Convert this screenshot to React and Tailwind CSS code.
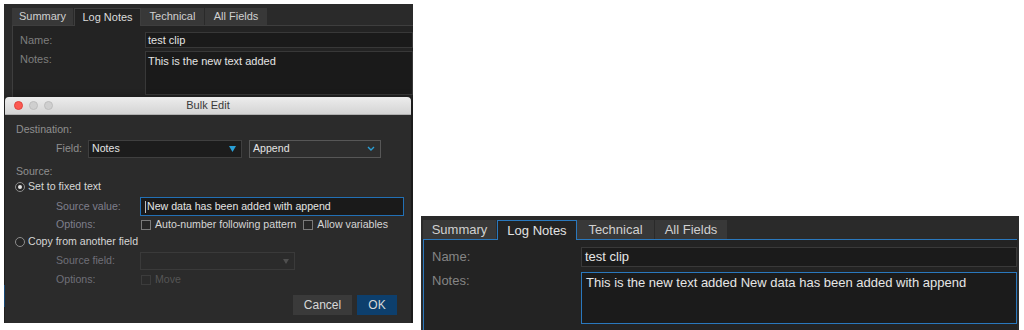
const Tab = ({ label, active, width, big }) => (
  <div
    className={
      "flex items-center justify-center shrink-0 " +
      (big ? "h-[19px] " : "h-[17px] ") +
      (active
        ? big
          ? "bg-[#232323] border-t border-x border-[#2a78bd] text-[#e2e2e2] relative z-10 -mb-px h-[20px]"
          : "bg-[#232323] border-t border-x border-[#3e3e3e] text-[#dcdcdc] relative z-10 -mb-px h-[18px]"
        : "bg-[#383838] text-[#d0d0d0] border-r border-[#2a2a2a]")
    }
    style={{ width }}
  >
    {label}
  </div>
);

const Radio = ({ checked }) => (
  <span className="w-[10px] h-[10px] rounded-full border border-[#8d8d8d] flex items-center justify-center shrink-0 bg-[#262626]">
    {checked && <span className="w-[4px] h-[4px] rounded-full bg-[#e6e6e6]" />}
  </span>
);

const Check = ({ dim }) => (
  <span
    className={
      "block w-[10px] h-[10px] border shrink-0 " +
      (dim ? "border-[#3c3c3c]" : "border-[#7a7a7a] bg-[#262626]")
    }
  />
);

const BulkEdit = () => (
  <div className="absolute left-[1px] top-[93px] w-[406px] h-[226px] bg-[#2b2b2b] shadow-[0_2px_8px_rgba(0,0,0,0.5)] rounded-t-[4px] text-[10.6px]">
    {/* title bar */}
    <div className="h-[18px] rounded-t-[4px] bg-gradient-to-b from-[#ededed] to-[#d4d4d4] border-b border-[#b0b0b0] flex items-center relative">
      <div className="flex items-center gap-[6px] pl-[9px]">
        <span className="w-[9px] h-[9px] rounded-full bg-[#fc5a52] border border-[#e0443e]" />
        <span className="w-[9px] h-[9px] rounded-full bg-[#cfcfcf] border border-[#bdbdbd]" />
        <span className="w-[9px] h-[9px] rounded-full bg-[#cfcfcf] border border-[#bdbdbd]" />
      </div>
      <div className="absolute inset-0 flex items-center justify-center text-[#3a3a3a] text-[11px]">
        Bulk Edit
      </div>
    </div>

    <div className="h-[14px] leading-[14px] mt-[7px] pl-[11px] text-[#8f8f8f]">
      Destination:
    </div>

    <div className="flex items-center mt-[4px] h-[18px]">
      <div className="w-[77px] text-right text-[#8f8f8f]">Field:</div>
      <div className="ml-[6px] w-[154px] h-[18px] bg-[#1c1c1c] border border-[#3f3f3f] flex items-center justify-between pl-[3px] pr-[5px] text-[#e4e4e4]">
        <span>Notes</span>
        <svg width="7" height="6" viewBox="0 0 7 6">
          <path d="M0 0 L7 0 L3.5 6 Z" fill="#2a9fd6" />
        </svg>
      </div>
      <div className="ml-[7px] w-[132px] h-[18px] bg-[#2e2e2e] border border-[#575757] flex items-center justify-between pl-[3px] pr-[5px] text-[#e4e4e4]">
        <span>Append</span>
        <svg width="8" height="6" viewBox="0 0 8 6">
          <path d="M1 1 L4 4 L7 1" fill="none" stroke="#2a9fd6" strokeWidth="1.4" />
        </svg>
      </div>
    </div>

    <div className="h-[14px] leading-[14px] mt-[6px] pl-[11px] text-[#8f8f8f]">
      Source:
    </div>

    <div className="h-[14px] mt-[2px] pl-[10px] flex items-center gap-[3px] text-[#d6d6d6]">
      <Radio checked />
      <span>Set to fixed text</span>
    </div>

    <div className="flex items-center mt-[3px] h-[19px]">
      <div className="w-[135px] pl-[51px] text-[#7f7f8c]">Source value:</div>
      <div className="w-[264px] h-[19px] bg-[#1a1a1a] border border-[#2270b5] flex items-center pl-[4px] text-[#e4e4e4]">
        <span className="w-px h-[12px] bg-[#bdbdbd] mr-px" />
        <span>New data has been added with append</span>
      </div>
    </div>

    <div className="flex items-center mt-[2px] h-[14px]">
      <div className="w-[135px] pl-[51px] text-[#7f7f8c]">Options:</div>
      <div className="flex items-center pl-[1px] text-[#d6d6d6]">
        <Check />
        <span className="ml-[4px]">Auto-number following pattern</span>
        <span className="ml-[7px]">
          <Check />
        </span>
        <span className="ml-[4px]">Allow variables</span>
      </div>
    </div>

    <div className="h-[14px] mt-[3px] pl-[10px] flex items-center gap-[3px] text-[#d6d6d6]">
      <Radio />
      <span>Copy from another field</span>
    </div>

    <div className="flex items-center mt-[3px] h-[18px]">
      <div className="w-[135px] pl-[51px] text-[#6f6f78]">Source field:</div>
      <div className="w-[155px] h-[18px] border border-[#3a3a3a] flex items-center justify-end pr-[5px]">
        <svg width="6" height="5" viewBox="0 0 6 5">
          <path d="M0 0 L6 0 L3 5 Z" fill="#4f4f4f" />
        </svg>
      </div>
    </div>

    <div className="flex items-center mt-[3px] h-[14px]">
      <div className="w-[135px] pl-[51px] text-[#6f6f78]">Options:</div>
      <div className="flex items-center pl-[1px] text-[#555555]">
        <Check dim />
        <span className="ml-[4px]">Move</span>
      </div>
    </div>

    <div className="flex justify-end gap-[5px] pr-[14px] mt-[8px]">
      <div className="w-[59px] h-[20px] bg-[#3a3a3a] flex items-center justify-center text-[#d8d8d8] text-[12px]">
        Cancel
      </div>
      <div className="w-[40px] h-[20px] bg-[#0d3f6d] flex items-center justify-center text-[#d8d8d8] text-[12px]">
        OK
      </div>
    </div>
  </div>
);

const LeftPanel = () => (
  <div className="ml-[4px] mt-[4px] w-[409px] h-[319px] bg-[#2a2a2a] relative overflow-hidden text-[11px] shrink-0">
    <div className="flex pl-[8px] pt-[4px]">
      <Tab label="Summary" width={62} />
      <Tab label="Log Notes" width={67} active />
      <Tab label="Technical" width={64} />
      <Tab label="All Fields" width={63} />
    </div>
    <div className="ml-[8px] border-l border-t border-[#3e3e3e] bg-[#232323] h-[300px] pt-[6px]">
      <div className="flex items-center h-[16px]">
        <div className="w-[132px] pl-[7px] text-[#7e7e7e]">Name:</div>
        <div className="flex-1 h-[16px] bg-[#1a1a1a] border border-[#383838] flex items-center pl-[2px] text-[#e4e4e4]">
          test clip
        </div>
      </div>
      <div className="flex mt-[3px]">
        <div className="w-[132px] pl-[7px] text-[#7e7e7e] leading-[14px] pt-[1px]">Notes:</div>
        <div className="flex-1 h-[44px] bg-[#1a1a1a] border border-[#383838] pl-[2px] pt-[2px] leading-[14px] text-[#e4e4e4]">
          This is the new text added
        </div>
      </div>
    </div>
    <div className="absolute left-0 top-[281px] w-[2px] h-[22px] bg-[#1f5f99]" />
    <BulkEdit />
  </div>
);

const RightPanel = () => (
  <div className="ml-[8px] mt-[216px] w-[598px] h-[114px] bg-[#2a2a2a] text-[13px] shrink-0 overflow-hidden">
    <div className="flex pl-[2px] pt-[4px]">
      <Tab label="Summary" width={74} big />
      <Tab label="Log Notes" width={80} active big />
      <Tab label="Technical" width={78} big />
      <Tab label="All Fields" width={73} big />
    </div>
    <div className="ml-[2px] mr-[2px] border-l border-t border-[#2a78bd] bg-[#232323] h-[100px] pt-[7px]">
      <div className="flex items-center h-[20px]">
        <div className="w-[157px] pl-[8px] text-[#858585]">Name:</div>
        <div className="flex-1 h-[20px] bg-[#1b1b1b] border border-[#393939] flex items-center pl-[3px] text-[#e6e6e6]">
          test clip
        </div>
      </div>
      <div className="flex mt-[5px]">
        <div className="w-[157px] pl-[8px] text-[#858585] leading-[16px] pt-[1px]">Notes:</div>
        <div className="flex-1 h-[52px] bg-[#1b1b1b] border border-[#2a78bd] pl-[4px] pt-[2px] leading-[16px] text-[#e6e6e6]">
          This is the new text added New data has been added with append
        </div>
      </div>
    </div>
  </div>
);

export default function App() {
  return (
    <div className="w-[1024px] h-[330px] bg-white flex items-start overflow-hidden font-['Liberation_Sans',Arial,sans-serif]">
      <LeftPanel />
      <RightPanel />
    </div>
  );
}
